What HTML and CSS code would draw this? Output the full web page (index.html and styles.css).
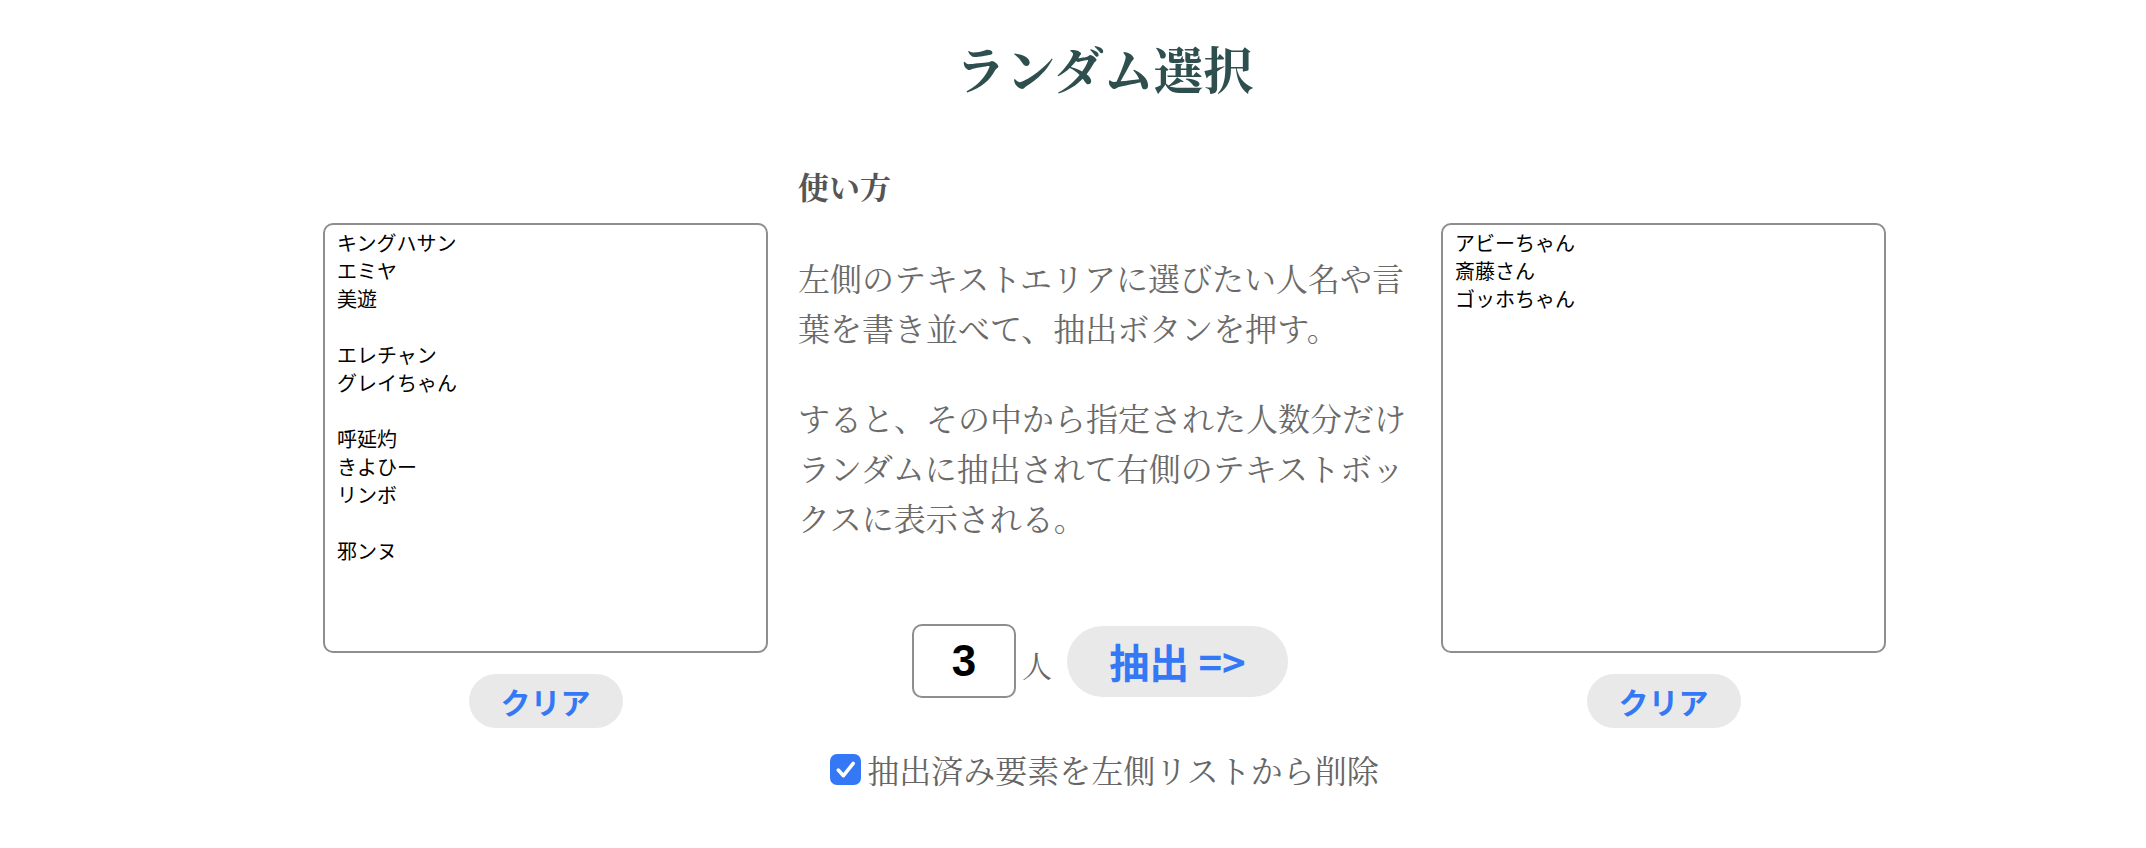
FILE: index.html
```html
<!DOCTYPE html>
<html lang="ja">
<head>
<meta charset="utf-8">
<title>ランダム選択</title>
<link rel="stylesheet" href="styles.css">
</head>
<body>
<div class="page">
  <div class="wrap">
    <h1 class="title">ランダム選択</h1>
    <div class="grid">
      <div class="side">
        <textarea class="list">キングハサン
エミヤ
美遊

エレチャン
グレイちゃん

呼延灼
きよひー
リンボ

邪ンヌ</textarea>
        <button class="pill clear">クリア</button>
      </div>
      <div class="middle">
        <h2 class="howto">使い方</h2>
        <p class="desc">左側のテキストエリアに選びたい人名や言葉を書き並べて、抽出ボタンを押す。</p>
        <p class="desc">すると、その中から指定された人数分だけランダムに抽出されて右側のテキストボックスに表示される。</p>
        <div class="controls">
          <input class="count" type="number" value="3">
          <span class="unit">人</span>
          <button class="pill extract">抽出 =&gt;</button>
        </div>
      </div>
      <div class="side">
        <textarea class="list">アビーちゃん
斎藤さん
ゴッホちゃん</textarea>
        <button class="pill clear">クリア</button>
      </div>
    </div>
    <label class="option">
      <span class="box"><svg width="30" height="30" viewBox="0 0 30 30"><path d="M8 15.5 L13 21 L22.5 9" fill="none" stroke="#fff" stroke-width="3.4" stroke-linecap="round" stroke-linejoin="round"/></svg></span>
      <span class="option-text">抽出済み要素を左側リストから削除</span>
    </label>
  </div>
</div>
</body>
</html>
```
FILE: styles.css
```css
html, body {
  margin: 0;
  padding: 0;
  background: #ffffff;
}

.page {
  padding-left: 63px;
}

.wrap {
  width: 1563px;
  margin: 0 auto;
  display: flex;
  flex-direction: column;
  align-items: center;
  font-family: "Noto Serif CJK JP", "Noto Sans CJK JP", serif;
}

.title {
  margin: 32px 0 0;
  font-size: 50px;
  line-height: 70px;
  font-weight: 700;
  color: #2f4f4f;
}

.grid {
  margin-top: 64px;
  display: grid;
  grid-template-columns: 445px 673px 445px;
  align-items: start;
  width: 100%;
}

.side {
  padding-top: 57px;
  display: flex;
  flex-direction: column;
  align-items: center;
}

.list {
  box-sizing: border-box;
  width: 445px;
  height: 430px;
  border: 2px solid #8e8e8e;
  border-radius: 10px;
  padding: 4px 12px;
  margin: 0;
  resize: none;
  font-family: "Noto Sans CJK JP", sans-serif;
  font-size: 20px;
  line-height: 28px;
  color: #000;
  background: #fff;
  outline: none;
}

.pill {
  border: none;
  background: #e9e9e9;
  color: #3478f6;
  font-family: "Noto Sans CJK JP", sans-serif;
  font-weight: 700;
  cursor: pointer;
  padding: 0;
}

.clear {
  margin-top: 21px;
  width: 154px;
  height: 54px;
  border-radius: 27px;
  font-size: 30px;
  line-height: 54px;
}

.middle {
  padding: 0 30px;
  display: flex;
  flex-direction: column;
}

.howto {
  margin: 0 0 46px;
  font-size: 31px;
  line-height: 40px;
  font-weight: 700;
  color: #555;
}

.desc {
  margin: 0 0 40px;
  font-size: 32px;
  line-height: 50px;
  color: #6a6a6a;
}

.desc + .desc {
  margin-bottom: 0;
}

.controls {
  margin-top: 82px;
  padding-right: 9px;
  display: flex;
  align-items: center;
  justify-content: center;
}

.count {
  box-sizing: border-box;
  width: 104px;
  height: 74px;
  border: 2px solid #8e8e8e;
  border-radius: 10px;
  text-align: center;
  font-family: "Liberation Sans", Arial, sans-serif;
  font-weight: 700;
  font-size: 44px;
  color: #000;
  padding: 0;
  margin: 0;
  -moz-appearance: textfield;
  appearance: textfield;
  outline: none;
}

.count::-webkit-inner-spin-button,
.count::-webkit-outer-spin-button {
  -webkit-appearance: none;
  margin: 0;
}

.unit {
  margin-left: 6px;
  margin-top: 6px;
  font-size: 30px;
  line-height: 40px;
  color: #666;
}

.extract {
  margin-left: 15px;
  width: 221px;
  height: 71px;
  border-radius: 36px;
  font-size: 40px;
  line-height: 71px;
}

.option {
  margin-top: 21px;
  display: flex;
  align-items: center;
  gap: 6px;
  cursor: pointer;
}

.box {
  width: 31px;
  height: 31px;
  border-radius: 7px;
  background: #3478f6;
  display: block;
}

.box svg {
  display: block;
  width: 31px;
  height: 31px;
}

.option-text {
  font-size: 32px;
  line-height: 40px;
  color: #666;
}
```
